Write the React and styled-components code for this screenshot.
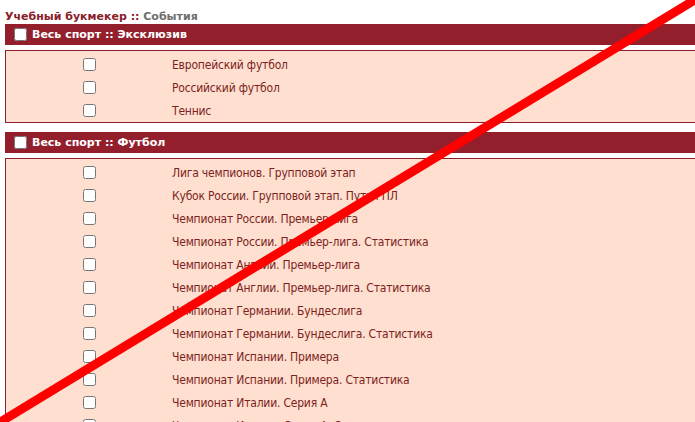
import React from "react";
import styled, { createGlobalStyle } from "styled-components";

const Global = createGlobalStyle`
  html, body { margin: 0; padding: 0; overflow: hidden; background: #fff; }
  body { font-family: "DejaVu Sans", Verdana, sans-serif; font-size: 11px; }
`;

const Page = styled.div`
  width: 760px;
  padding: 9px 0 0 5px;
`;

const Title = styled.div`
  font-weight: bold;
  font-size: 11px;
  line-height: 15px;
  color: #8b1c2a;
  span { color: #6e6e6e; }
`;

const Section = styled.section`
  margin-bottom: 9px;
`;

const Bar = styled.div`
  height: 21px;
  background: #931f2d;
  display: flex;
  align-items: center;
  padding-left: 5px;
  color: #fff;
  font-weight: bold;
  font-size: 11px;
  gap: 2px;
`;

const Panel = styled.div`
  margin-top: 5px;
  border: 1px solid #8e1d2b;
  background: #ffdfd0;
  padding-top: 2px;
`;

const Row = styled.label`
  display: grid;
  grid-template-columns: 166px 1fr;
  height: 23px;
  align-items: center;
  color: #7d1f22;
  font-family: "DejaVu Sans Condensed", "Liberation Sans", sans-serif;
  font-size: 12px;
  letter-spacing: -0.2px;
`;

const CheckCell = styled.div`
  display: flex;
  justify-content: center;
`;

const Box = styled.input.attrs({ type: "checkbox" })`
  width: 13px;
  height: 13px;
  margin: 3px 3px 3px 4px;
`;

const Overlay = styled.svg`
  position: fixed;
  inset: 0;
  width: 695px;
  height: 422px;
  pointer-events: none;
`;

const sections = [
  {
    name: "Весь спорт :: Эксклюзив",
    items: ["Европейский футбол", "Российский футбол", "Теннис"],
  },
  {
    name: "Весь спорт :: Футбол",
    items: [
      "Лига чемпионов. Групповой этап",
      "Кубок России. Групповой этап. Путь РПЛ",
      "Чемпионат России. Премьер-лига",
      "Чемпионат России. Премьер-лига. Статистика",
      "Чемпионат Англии. Премьер-лига",
      "Чемпионат Англии. Премьер-лига. Статистика",
      "Чемпионат Германии. Бундеслига",
      "Чемпионат Германии. Бундеслига. Статистика",
      "Чемпионат Испании. Примера",
      "Чемпионат Испании. Примера. Статистика",
      "Чемпионат Италии. Серия А",
      "Чемпионат Италии. Серия А. Статистика",
    ],
  },
];

export default function App() {
  return (
    <>
      <Global />
      <Page>
        <Title>
          Учебный букмекер :: <span>События</span>
        </Title>
        {sections.map((s) => (
          <Section key={s.name}>
            <Bar>
              <Box />
              {s.name}
            </Bar>
            <Panel>
              {s.items.map((it) => (
                <Row key={it}>
                  <CheckCell>
                    <Box />
                  </CheckCell>
                  <span>{it}</span>
                </Row>
              ))}
            </Panel>
          </Section>
        ))}
      </Page>
      <Overlay viewBox="0 0 695 422">
        <line x1="-3" y1="424" x2="698" y2="-2" stroke="#ff0000" strokeWidth="9" />
      </Overlay>
    </>
  );
}
